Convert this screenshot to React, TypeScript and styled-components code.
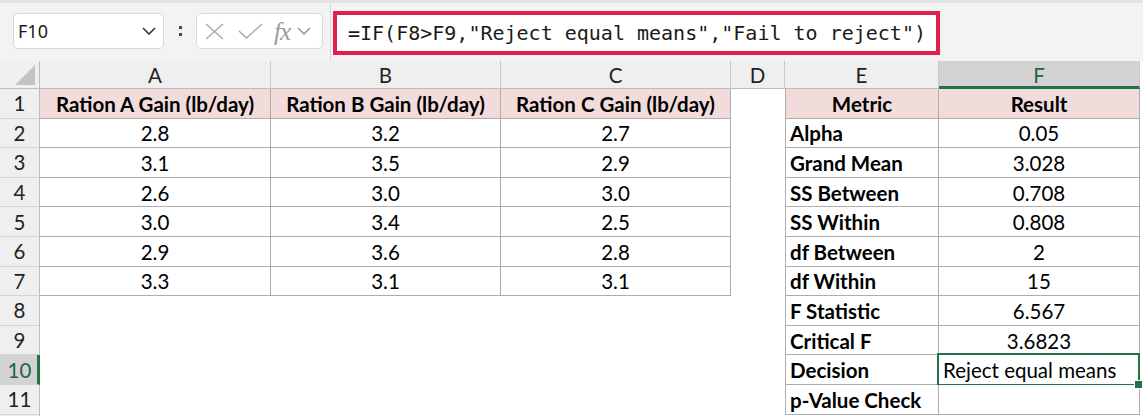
import React from "react";
import styled, { createGlobalStyle, css } from "styled-components";

const GlobalStyle = createGlobalStyle`
  html, body {
    margin: 0;
    padding: 0;
    background: #ffffff;
    overflow: hidden;
  }
  * { box-sizing: border-box; }
`;

const GREEN = "#217346";
const CELL_LINE = "#adadad";
const HEAD_BG = "#efefef";
const HEAD_ACTIVE_BG = "#d3d3d3";
const PINK = "#f2dcdb";

const Page = styled.div`
  width: 1143px;
  height: 416px;
  overflow: hidden;
  background: #ffffff;
`;

/* ---------- formula bar ---------- */

const FormulaBar = styled.div`
  height: 61px;
  background: #f3f3f3;
  border-top: 3px solid #e4e4e4;
  display: flex;
  align-items: flex-start;
  padding-left: 13px;
`;

const NameBox = styled.div`
  margin-top: 10px;
  width: 151px;
  height: 36px;
  background: #ffffff;
  border: 1px solid #d6d6d6;
  border-radius: 5px;
  display: flex;
  align-items: center;
  justify-content: space-between;
  padding: 0 7px 0 4px;
  font-family: "Noto Sans", "Open Sans", sans-serif;
  font-size: 18px;
  color: #1a1a1a;
`;

const Grip = styled.div`
  width: 32px;
  height: 36px;
  margin-top: 10px;
  display: flex;
  flex-direction: column;
  align-items: center;
  justify-content: center;
  gap: 4px;
`;

const GripDot = styled.span`
  width: 3px;
  height: 3px;
  background: #444;
  border-radius: 0.5px;
`;

const FxBox = styled.div`
  margin-top: 10px;
  width: 127px;
  height: 36px;
  background: #ffffff;
  border: 1px solid #dadada;
  border-radius: 5px;
  display: flex;
  align-items: center;
  padding-left: 8px;
`;

const FxLabel = styled.span`
  font-family: "Liberation Serif", "DejaVu Serif", serif;
  font-style: italic;
  font-size: 25px;
  color: #9a9a9a;
  margin-left: 11px;
  line-height: 1;
  letter-spacing: -1px;
`;

const BarDivider = styled.div`
  width: 1px;
  height: 58px;
  background: #d9d9d9;
  margin: 0 2px 0 7px;
`;

const FormulaInput = styled.div`
  margin-top: 8px;
  width: 607px;
  height: 44px;
  background: #ffffff;
  border: 4px solid #e0214b;
  display: flex;
  align-items: center;
  padding: 0 0 1px 11px;
  font-family: "DejaVu Sans Mono", "Liberation Mono", monospace;
  font-size: 20px;
  color: #1a1a1a;
  white-space: pre;
`;

const IconSvg = styled.svg<{ $ml?: number }>`
  display: block;
  flex: none;
  margin-left: ${(p) => p.$ml ?? 0}px;
`;

/* ---------- sheet grid ---------- */

const Sheet = styled.div`
  display: grid;
  grid-template-columns: 40px 231px 230px 230px 54px 154px 201px 3px;
  grid-template-rows: 28px repeat(12, 29.6px);
  font-family: Lato, "Noto Sans", sans-serif;
  font-size: 20.5px;
  color: #000;
`;

const Corner = styled.div`
  background: ${HEAD_BG};
  border-right: 1px solid #bdbdbd;
  border-bottom: 1px solid #bdbdbd;
  display: flex;
  align-items: flex-end;
  justify-content: flex-end;
  padding: 0 4px 3px 0;
`;

const ColHead = styled.div<{ $active?: boolean }>`
  background: ${(p) => (p.$active ? HEAD_ACTIVE_BG : HEAD_BG)};
  border-right: 1px solid #c9c9c9;
  border-bottom: ${(p) => (p.$active ? `3px solid ${GREEN}` : "1px solid #bdbdbd")};
  color: ${(p) => (p.$active ? "#1d6640" : "#1f1f1f")};
  display: flex;
  align-items: center;
  justify-content: center;
  padding-top: ${(p) => (p.$active ? 2 : 0)}px;
`;

const RowHead = styled.div<{ $active?: boolean }>`
  background: ${(p) => (p.$active ? HEAD_ACTIVE_BG : HEAD_BG)};
  border-right: ${(p) => (p.$active ? `3px solid ${GREEN}` : "1px solid #bdbdbd")};
  border-bottom: 1px solid #d4d4d4;
  color: ${(p) => (p.$active ? "#1d6640" : "#1f1f1f")};
  display: flex;
  align-items: center;
  justify-content: center;
  padding-left: ${(p) => (p.$active ? 2 : 0)}px;
`;

type CellProps = {
  $fill?: boolean;
  $bold?: boolean;
  $align?: "left" | "center";
  $boxed?: boolean;
  $left?: boolean;
  $selected?: boolean;
};

const Cell = styled.div<CellProps>`
  position: relative;
  display: flex;
  align-items: center;
  justify-content: ${(p) => (p.$align === "left" ? "flex-start" : "center")};
  padding: 1px 3px 0 ${(p) => (p.$align === "left" ? 4 : 3)}px;
  background: ${(p) => (p.$fill ? PINK : "#ffffff")};
  font-weight: ${(p) => (p.$bold ? 700 : 400)};
  white-space: nowrap;
  ${(p) =>
    p.$boxed &&
    css`
      border-right: 1px solid ${CELL_LINE};
      border-bottom: 1px solid ${CELL_LINE};
    `}
  ${(p) =>
    p.$left &&
    css`
      border-left: 1px solid ${CELL_LINE};
    `}
  ${(p) =>
    p.$selected &&
    css`
      &::after {
        content: "";
        position: absolute;
        left: -2px;
        top: -2px;
        right: -1px;
        bottom: -2px;
        border: 2px solid ${GREEN};
        pointer-events: none;
      }
      &::before {
        content: "";
        position: absolute;
        right: -4px;
        bottom: -5px;
        width: 7px;
        height: 7px;
        background: ${GREEN};
        border: 1px solid #ffffff;
        z-index: 1;
      }
    `}
`;

const Blank = styled.div`
  background: #ffffff;
`;

/* ---------- data ---------- */

const gains: [string, string, string][] = [
  ["2.8", "3.2", "2.7"],
  ["3.1", "3.5", "2.9"],
  ["2.6", "3.0", "3.0"],
  ["3.0", "3.4", "2.5"],
  ["2.9", "3.6", "2.8"],
  ["3.3", "3.1", "3.1"],
];

const metrics: [string, string][] = [
  ["Alpha", "0.05"],
  ["Grand Mean", "3.028"],
  ["SS Between", "0.708"],
  ["SS Within", "0.808"],
  ["df Between", "2"],
  ["df Within", "15"],
  ["F Statistic", "6.567"],
  ["Critical F", "3.6823"],
  ["Decision", "Reject equal means"],
  ["p-Value Check", ""],
];

const columns = ["A", "B", "C", "D", "E", "F"];
const ACTIVE_ROW = 10;

function Chevron({ color, ml }: { color: string; ml?: number }) {
  return (
    <IconSvg $ml={ml} width="14" height="8" viewBox="0 0 14 8">
      <polyline points="1,1 7,7 13,1" fill="none" stroke={color} strokeWidth="1.6" />
    </IconSvg>
  );
}

function SheetRow({ row }: { row: number }) {
  const cells: React.ReactNode[] = [];
  const active = row === ACTIVE_ROW;
  cells.push(
    <RowHead key="h" $active={active}>
      {row <= 11 ? row : ""}
    </RowHead>
  );

  // columns A..C: the feed trial table
  if (row === 1) {
    ["A", "B", "C"].forEach((c) =>
      cells.push(
        <Cell key={c} $fill $bold $boxed>
          Ration {c} Gain (lb/day)
        </Cell>
      )
    );
  } else if (row <= 7) {
    gains[row - 2].forEach((v, i) =>
      cells.push(
        <Cell key={i} $boxed>
          {v}
        </Cell>
      )
    );
  } else {
    cells.push(<Blank key="a" />, <Blank key="b" />, <Blank key="c" />);
  }

  // column D stays empty
  cells.push(<Blank key="d" />);

  // columns E..F: the ANOVA summary
  if (row === 1) {
    cells.push(
      <Cell key="e" $fill $bold $boxed $left>
        Metric
      </Cell>,
      <Cell key="f" $fill $bold $boxed>
        Result
      </Cell>
    );
  } else if (row <= 11) {
    const [label, value] = metrics[row - 2];
    const isText = value !== "" && isNaN(Number(value));
    cells.push(
      <Cell key="e" $bold $boxed $left $align="left">
        {label}
      </Cell>,
      <Cell key="f" $boxed $align={isText ? "left" : "center"} $selected={active}>
        {value}
      </Cell>
    );
  } else {
    cells.push(<Blank key="e" />, <Blank key="f" />);
  }
  cells.push(<Blank key="pad" />);
  return <>{cells}</>;
}

export default function App() {
  return (
    <Page>
      <GlobalStyle />
      <FormulaBar>
        <NameBox>
          <span>F10</span>
          <Chevron color="#333333" />
        </NameBox>
        <Grip>
          <GripDot />
          <GripDot />
        </Grip>
        <FxBox>
          <IconSvg width="19" height="17" viewBox="0 0 19 17">
            <line x1="1" y1="1" x2="18" y2="16" stroke="#a9a9a9" strokeWidth="1.4" />
            <line x1="18" y1="1" x2="1" y2="16" stroke="#a9a9a9" strokeWidth="1.4" />
          </IconSvg>
          <IconSvg $ml={14} width="25" height="16" viewBox="0 0 25 16">
            <polyline points="1,8 8.5,15 24,1" fill="none" stroke="#a9a9a9" strokeWidth="1.4" />
          </IconSvg>
          <FxLabel>fx</FxLabel>
          <Chevron color="#9a9a9a" ml={7} />
        </FxBox>
        <BarDivider />
        <FormulaInput>=IF(F8&gt;F9,"Reject equal means","Fail to reject")</FormulaInput>
      </FormulaBar>

      <Sheet>
        <Corner>
          <svg width="20" height="20" viewBox="0 0 20 20">
            <polygon points="20,0 20,20 0,20" fill="#c3c3c3" />
          </svg>
        </Corner>
        {columns.map((c) => (
          <ColHead key={c} $active={c === "F"}>
            {c}
          </ColHead>
        ))}
        <Blank />
        {Array.from({ length: 12 }, (_, i) => (
          <SheetRow key={i} row={i + 1} />
        ))}
      </Sheet>
    </Page>
  );
}
